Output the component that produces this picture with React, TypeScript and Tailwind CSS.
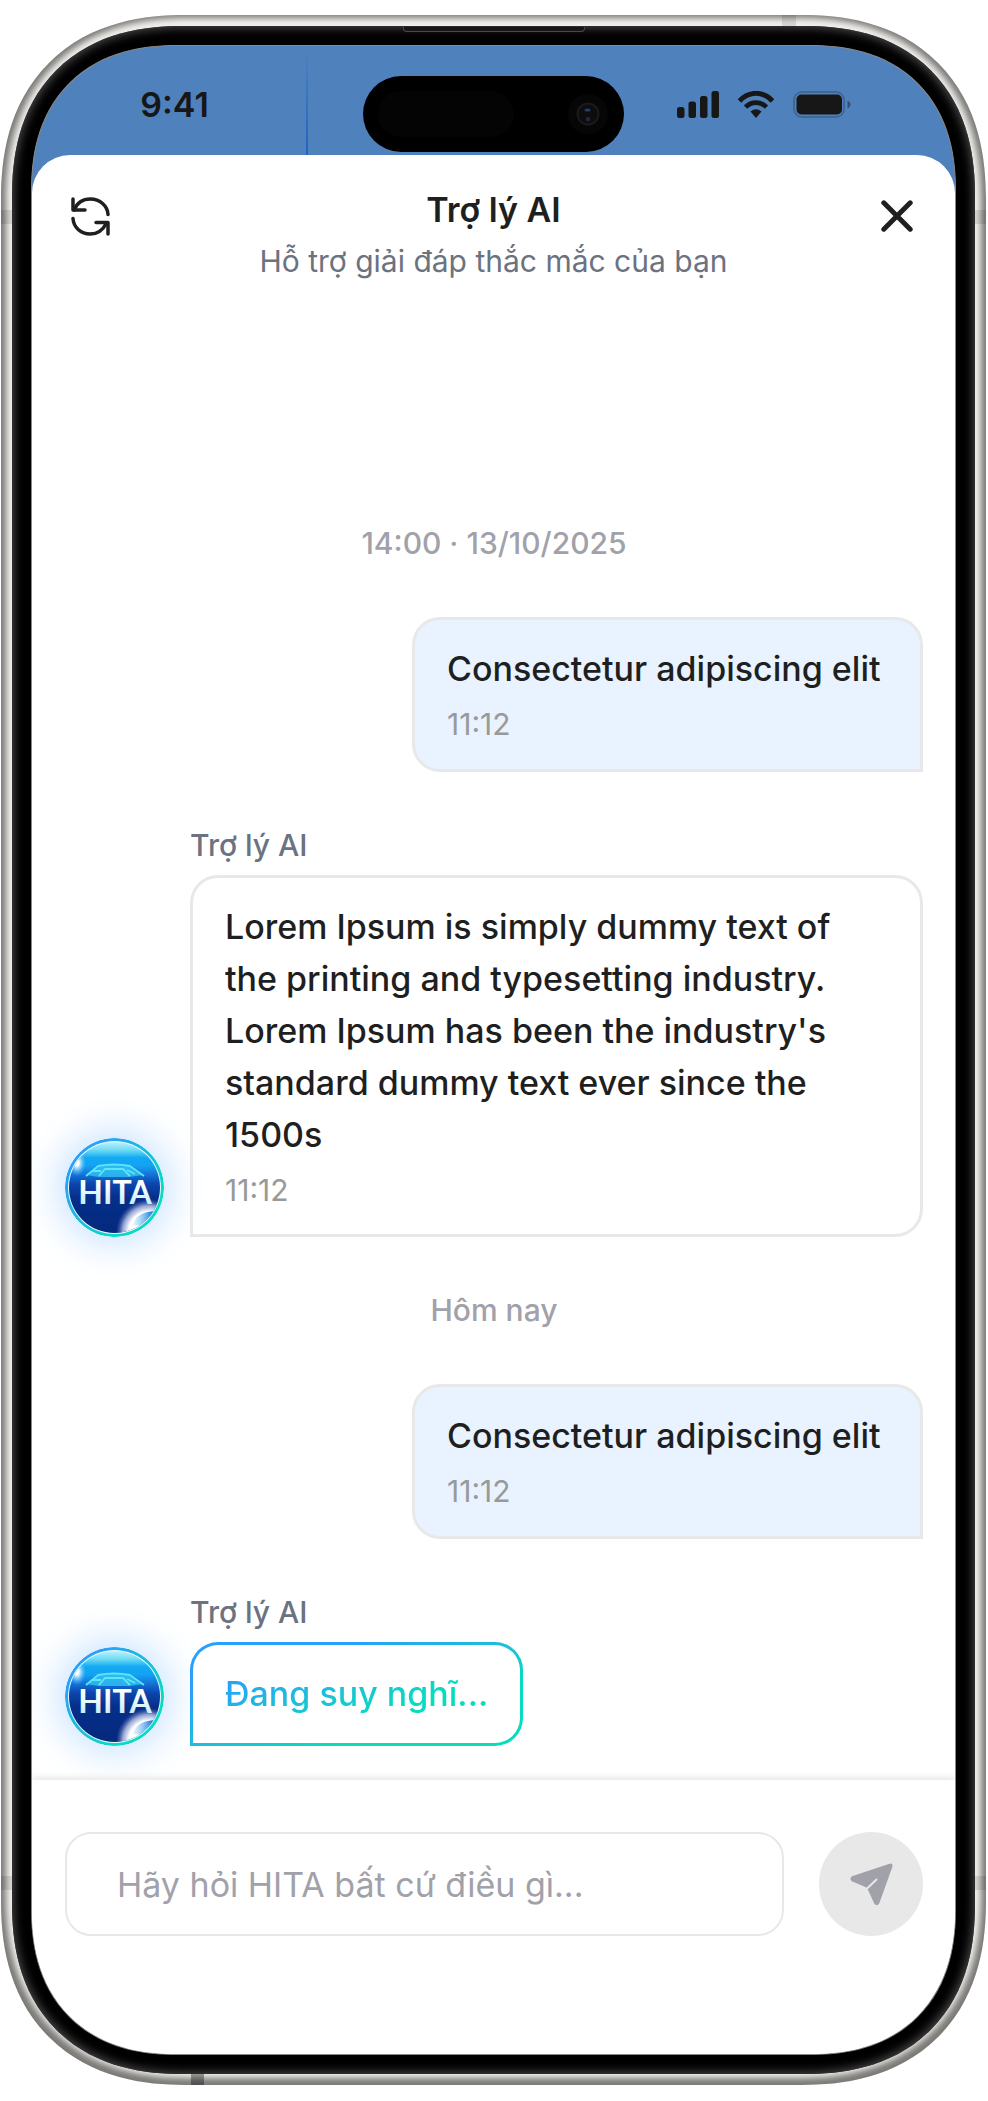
import { useId } from "react";
import type { ReactNode } from "react";

type BubbleProps = {
  text: string;
  time: string;
  className?: string;
};

const RefreshIcon = () => (
  <svg
    className="w-[39px] h-[39px]"
    viewBox="0 0 39 39"
    fill="none"
    stroke="#1f1f1f"
    strokeWidth="3.5"
    strokeLinecap="round"
    strokeLinejoin="round"
    aria-hidden="true"
  >
    <path d="M2 2v11h12" />
    <path d="M3 13C6 6 12 2 19.300 2C29 2 36.500 9 37 17.500" />
    <path d="M2 21.500C2.500 30 9.500 37 19.300 37C26 37 32 33 35.500 26" />
    <path d="M25 25.500h12v11.500" />
  </svg>
);

const CloseIcon = () => (
  <svg
    className="w-8 h-8"
    viewBox="0 0 32 32"
    fill="none"
    stroke="#1f1f1f"
    strokeWidth="5"
    strokeLinecap="round"
    aria-hidden="true"
  >
    <path d="M2.800 2.800l26.400 26.400M29.200 2.800l-26.400 26.400" />
  </svg>
);

const SendIcon = () => (
  <svg className="w-[43px] h-[43px]" viewBox="0 0 43 43" aria-hidden="true">
    <path
      d="M2 13.300L38.800.900Q43.600-.400 42.200 4.300L29.300 40.300Q27.200 44 24.300 40.800L18.300 27.500L16 24.300L1.800 18.200Q-1 15.500 2 13.300Z"
      fill="#a1a1aa"
    />
    <path
      d="M16.500 26L26.500 16.500"
      stroke="#e8e8e8"
      strokeWidth="2"
      strokeLinecap="round"
    />
  </svg>
);

const SignalIcon = () => (
  <svg className="w-[42px] h-[27px]" viewBox="0 0 42 27" fill="#171717" aria-hidden="true">
    <rect x="0" y="16" width="7.500" height="11" rx="2.500" />
    <rect x="11.500" y="10.500" width="7.500" height="16.500" rx="2.500" />
    <rect x="23" y="5" width="7.500" height="22" rx="2.500" />
    <rect x="34.500" y="0" width="7.500" height="27" rx="2.500" />
  </svg>
);

const WifiIcon = () => (
  <svg className="w-[38px] h-[27px]" viewBox="0 0 38 27" fill="none" aria-hidden="true">
    <path d="M2.500 10C12-.200 26-.200 35.500 10" stroke="#171717" strokeWidth="5" />
    <path d="M8.500 16.200C14.500 10 23.500 10 29.500 16.200" stroke="#171717" strokeWidth="4.800" />
    <path d="M13.500 20.500Q19 16.200 24.500 20.500L19 27Z" fill="#171717" />
  </svg>
);

const BatteryIcon = () => (
  <svg className="w-[58px] h-[27px]" viewBox="0 0 58 27" fill="none" aria-hidden="true">
    <rect x="1" y="1" width="50" height="25" rx="8" stroke="#171717" strokeOpacity=".25" strokeWidth="2" />
    <rect x="3.500" y="3.500" width="45.500" height="20" rx="5" fill="#171717" />
    <path d="M54.500 9.500c4 1.800 4 6.200 0 8z" fill="#171717" fillOpacity=".45" />
  </svg>
);

const Avatar = () => {
  const id = useId();
  return (
    <svg
      className="w-[99px] h-[99px] shrink-0 rounded-full shadow-[0_0_40px_6px_#c4e0ff]"
      viewBox="0 0 99 99"
      role="img"
      aria-label="HITA"
    >
      <defs>
        <linearGradient id={`${id}ring`} x1="0" y1="0" x2="1" y2="1">
          <stop offset=".2" stopColor="#2aa0fa" />
          <stop offset=".5" stopColor="#1bbfda" />
          <stop offset=".75" stopColor="#06dcc0" />
        </linearGradient>
        <linearGradient id={`${id}sky`} x1="0" y1="0" x2="0" y2="1">
          <stop offset="0" stopColor="#e8fbff" />
          <stop offset=".12" stopColor="#6edcf5" />
          <stop offset=".2" stopColor="#12a9f3" />
          <stop offset=".28" stopColor="#14a2f2" />
          <stop offset=".36" stopColor="#1478dc" />
          <stop offset=".46" stopColor="#0c46ae" />
          <stop offset=".6" stopColor="#062f8a" />
          <stop offset="1" stopColor="#04287c" />
        </linearGradient>
        <linearGradient id={`${id}word`} x1="0" y1="0" x2="0" y2="1">
          <stop offset=".3" stopColor="#ffffff" />
          <stop offset="1" stopColor="#b4e8fa" />
        </linearGradient>
        <radialGradient id={`${id}orb`}>
          <stop offset="0" stopColor="#ffffff" />
          <stop offset=".62" stopColor="#ffffff" />
          <stop offset=".8" stopColor="#b9c3e6" stopOpacity=".8" />
          <stop offset="1" stopColor="#5a70b8" stopOpacity="0" />
        </radialGradient>
        <linearGradient id={`${id}core`} x1="0" y1="0" x2="1" y2="0">
          <stop offset="0" stopColor="#7cccf8" stopOpacity=".2" />
          <stop offset=".7" stopColor="#1676dc" />
        </linearGradient>
        <radialGradient id={`${id}flare`}>
          <stop offset=".2" stopColor="#ffffff" />
          <stop offset="1" stopColor="#5cc6fa" stopOpacity="0" />
        </radialGradient>
        <clipPath id={`${id}clip`}>
          <circle cx="49.500" cy="49.500" r="45.500" />
        </clipPath>
      </defs>
      <circle cx="49.500" cy="49.500" r="49.500" fill={`url(#${id}ring)`} />
      <circle cx="49.500" cy="49.500" r="46.500" fill="#e9f8ff" />
      <g clipPath={`url(#${id}clip)`}>
        <rect width="99" height="99" fill={`url(#${id}sky)`} />
        <ellipse cx="12" cy="25" rx="9" ry="13" fill={`url(#${id}flare)`} />
        <circle cx="84" cy="94" r="33" fill={`url(#${id}orb)`} />
        <path d="M68 87Q71 74 90 73L96 80L86 88Z" fill={`url(#${id}core)`} />
        <path
          d="M21 37L33 28Q49 25 65 28L78 37L64 39H34Z"
          fill="#2fc2f4"
          fillOpacity=".8"
        />
        <path
          d="M21 38L33 28Q49 25 65 28L79 38M34 38L40 31H58L65 38M28 33H36M62 32L70 36"
          stroke="#5fe4f8"
          strokeWidth="1.800"
          fill="none"
        />
      </g>
      <text
        x="50"
        y="66"
        textAnchor="middle"
        fontFamily="Lato, sans-serif"
        fontWeight="700"
        fontSize="32"
        fill={`url(#${id}word)`}
      >
        HITA
      </text>
    </svg>
  );
};

const DateLabel = ({ children }: { children: ReactNode }) => (
  <div className="text-center text-[30px] leading-[43px] font-medium text-[#a1a1aa]">
    {children}
  </div>
);

const UserBubble = ({ text, time, className = "" }: BubbleProps) => (
  <div
    className={`self-end min-w-[511px] flex flex-col gap-2 rounded-[28px] rounded-br-none border-[3px] border-[#e8e8e8] bg-[#e8f3ff] px-8 py-[23px] ${className}`}
  >
    <p className="text-[34px] leading-[52px] font-medium">{text}</p>
    <time className="text-[30px] leading-[43px] text-[#999999]">{time}</time>
  </div>
);

const AssistantRow = ({ children, grow = false }: { children: ReactNode; grow?: boolean }) => (
  <div className="flex items-end gap-[26px]">
    <Avatar />
    <div className={`flex flex-col gap-2 min-w-0 ${grow ? "flex-1" : ""}`}>
      <div className="text-[30px] leading-[43px] font-medium text-[#6b7280]">Trợ lý AI</div>
      {children}
    </div>
  </div>
);

const StatusBar = () => (
  <div className="relative grid grid-cols-[1fr_auto_1fr] items-start pt-[30px] pb-[3px] text-[#171717]">
    <span className="absolute inset-y-0 left-[274px] w-0.5 bg-linear-to-b from-[#4f82bc] to-[#1f62c4]" />
    <div className="flex h-14 items-center justify-center pr-[46px] text-[34px] font-semibold">
      9:41
    </div>
    <div className="flex h-[76px] w-[261px] items-center justify-between rounded-full bg-black px-[15px]">
      <span className="h-[46px] w-[136px] rounded-full bg-[#040404]" />
      <svg className="w-[42px] h-[42px]" viewBox="0 0 42 42" aria-hidden="true">
        <circle cx="21" cy="21" r="20" fill="#060606" />
        <circle cx="21" cy="21" r="10.500" fill="#0d0d0f" stroke="#1a1a1c" strokeWidth="2" />
        <ellipse cx="20.500" cy="17" rx="3" ry="1.500" fill="#21406f" />
        <circle cx="21" cy="26" r="2.200" fill="#23283a" />
      </svg>
    </div>
    <div className="flex h-14 items-center justify-center gap-[18px] pr-[52px]">
      <SignalIcon />
      <WifiIcon />
      <BatteryIcon />
    </div>
  </div>
);

const ChatHeader = () => (
  <header className="flex items-start justify-between px-8 pt-[29px]">
    <button type="button" aria-label="Làm mới" className="flex h-16 w-[52px] items-center justify-center">
      <RefreshIcon />
    </button>
    <div className="flex flex-col gap-1 text-center">
      <h1 className="text-[34px] leading-[52px] font-semibold">Trợ lý AI</h1>
      <p className="text-[30px] leading-[43px] text-[#6b7280]">
        Hỗ trợ giải đáp thắc mắc của bạn
      </p>
    </div>
    <button type="button" aria-label="Đóng" className="flex h-16 w-[52px] items-center justify-center">
      <CloseIcon />
    </button>
  </header>
);

const Composer = () => (
  <form
    className="flex items-center gap-[35px] bg-white pr-8 pl-[33px] pt-[52px] pb-[118px] shadow-[0_-3px_6px_#e9e9e6]"
    onSubmit={(e) => e.preventDefault()}
  >
    <input
      type="text"
      aria-label="Tin nhắn"
      placeholder="Hãy hỏi HITA bất cứ điều gì..."
      className="h-[104px] min-w-0 flex-1 rounded-[26px] border-2 border-[#e8e8e8] px-[50px] text-[34px] outline-none placeholder:text-[#a1a1aa]"
    />
    <button
      type="submit"
      aria-label="Gửi"
      className="flex size-[104px] shrink-0 items-center justify-center rounded-full bg-[#e8e8e8]"
    >
      <SendIcon />
    </button>
  </form>
);

// antenna bands around the metal frame
const AntennaBands = () => (
  <>
    <span className="absolute left-0 top-[195px] h-[14px] w-[11px] bg-black/10" />
    <span className="absolute right-0 top-[195px] h-[14px] w-[11px] bg-black/10" />
    <span className="absolute left-0 bottom-[195px] h-[14px] w-[11px] bg-black/10" />
    <span className="absolute right-0 bottom-[195px] h-[14px] w-[11px] bg-black/10" />
    <span className="absolute right-[190px] top-0 h-[11px] w-[14px] bg-black/10" />
    <span className="absolute left-[190px] bottom-0 h-[11px] w-[13px] bg-black/35" />
  </>
);

const App = () => {
  return (
    <div className="flex min-h-screen flex-col bg-white pt-[15px] pr-0.5 pb-4 pl-px font-['Inter',sans-serif] text-[#1f1f1f]">
      <div className="relative flex flex-1 flex-col rounded-[184px] bg-[#f0efec] p-[11px] shadow-[inset_0_-2px_6px_5px_#7c7a77] [corner-shape:superellipse(1.2)]">
        <AntennaBands />
        <div className="relative flex flex-1 flex-col rounded-[170px] bg-black p-[19px] shadow-[inset_0_0_10px_2px_#484848] [corner-shape:superellipse(1.2)]">
          <span className="absolute left-1/2 top-px h-[5px] w-[182px] -translate-x-1/2 rounded-b border border-t-0 border-[#4a4a4a] bg-[#161616]" />
          <div className="flex flex-1 flex-col overflow-hidden rounded-[146px] border border-[#8a8a8a] bg-[#4f82bc] [corner-shape:superellipse(1.2)]">
            <StatusBar />
            <main className="flex flex-1 flex-col rounded-t-[38px] bg-white">
              <ChatHeader />
              <section className="flex flex-1 flex-col justify-end gap-[52px] pr-8 pl-[33px] pb-[34px]">
                <DateLabel>14:00 · 13/10/2025</DateLabel>
                <UserBubble text="Consectetur adipiscing elit" time="11:12" />
                <AssistantRow grow>
                  <div className="flex flex-col gap-2 rounded-[28px] rounded-bl-none border-[3px] border-[#e8e8e8] px-8 pt-[23px] pb-[22px]">
                    <p className="text-[34px] leading-[52px] font-medium">
                      Lorem Ipsum is simply dummy text of the printing and typesetting
                      industry. Lorem Ipsum has been the industry's standard dummy text
                      ever since the 1500s
                    </p>
                    <time className="text-[30px] leading-[43px] text-[#999999]">11:12</time>
                  </div>
                </AssistantRow>
                <DateLabel>Hôm nay</DateLabel>
                <UserBubble text="Consectetur adipiscing elit" time="11:12" />
                <AssistantRow>
                  <div className="rounded-[28px] rounded-bl-none border-[3px] border-transparent px-8 py-[23px] [background:linear-gradient(white,white)_padding-box,linear-gradient(162deg,#2aa0fa_25%,#1bbfda_50%,#06dcc0_70%)_border-box]">
                    <p className="bg-[linear-gradient(160deg,#2aa0fa_10%,#1bbfda_40%,#06dcc0_70%)] bg-clip-text text-[34px] leading-[52px] font-medium text-transparent">
                      Đang suy nghĩ...
                    </p>
                  </div>
                </AssistantRow>
              </section>
              <Composer />
            </main>
          </div>
        </div>
      </div>
    </div>
  );
};

export default App;
